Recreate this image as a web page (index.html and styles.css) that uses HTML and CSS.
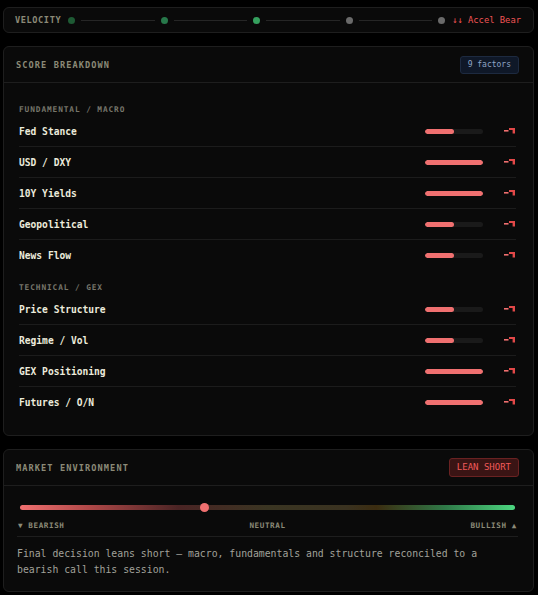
FILE: index.html
```html
<!DOCTYPE html>
<html lang="en">
<head>
    <meta charset="UTF-8">
    <meta name="viewport" content="width=device-width, initial-scale=1.0">
    <title>Bias Dashboard</title>
    <link rel="stylesheet" href="styles.css">
</head>
<body>

<!-- Velocity strip -->
<div class="card velocity">
    <span class="velocity-label">VELOCITY</span>
    <div class="velocity-track">
        <span class="vdot vdot-1"></span><span class="vline"></span>
        <span class="vdot vdot-2"></span><span class="vline"></span>
        <span class="vdot vdot-3"></span><span class="vline"></span>
        <span class="vdot vdot-4"></span><span class="vline"></span>
        <span class="vdot vdot-4"></span>
    </div>
    <span class="velocity-status">&darr;&darr; Accel Bear</span>
</div>

<!-- Score breakdown -->
<div class="card">
    <div class="card-head">
        <span class="card-title">SCORE BREAKDOWN</span>
        <span class="badge badge-blue">9 factors</span>
    </div>
    <div class="card-body score-body">
        <div class="group-label">FUNDAMENTAL / MACRO</div>
        <div class="factor">
            <span class="factor-name">Fed Stance</span>
            <span class="bar"><span class="bar-fill half"></span></span>
            <svg class="tick" width="12" height="6" viewBox="0 0 12 6"><rect x="0" y="2" width="4.5" height="1.6" fill="#f07070"/><path d="M5 0H11V5.5H8.6V2H5Z" fill="#e24848"/></svg>
        </div>
        <div class="factor">
            <span class="factor-name">USD / DXY</span>
            <span class="bar"><span class="bar-fill full"></span></span>
            <svg class="tick" width="12" height="6" viewBox="0 0 12 6"><rect x="0" y="2" width="4.5" height="1.6" fill="#f07070"/><path d="M5 0H11V5.5H8.6V2H5Z" fill="#e24848"/></svg>
        </div>
        <div class="factor">
            <span class="factor-name">10Y Yields</span>
            <span class="bar"><span class="bar-fill full"></span></span>
            <svg class="tick" width="12" height="6" viewBox="0 0 12 6"><rect x="0" y="2" width="4.5" height="1.6" fill="#f07070"/><path d="M5 0H11V5.5H8.6V2H5Z" fill="#e24848"/></svg>
        </div>
        <div class="factor">
            <span class="factor-name">Geopolitical</span>
            <span class="bar"><span class="bar-fill half"></span></span>
            <svg class="tick" width="12" height="6" viewBox="0 0 12 6"><rect x="0" y="2" width="4.5" height="1.6" fill="#f07070"/><path d="M5 0H11V5.5H8.6V2H5Z" fill="#e24848"/></svg>
        </div>
        <div class="factor">
            <span class="factor-name">News Flow</span>
            <span class="bar"><span class="bar-fill half"></span></span>
            <svg class="tick" width="12" height="6" viewBox="0 0 12 6"><rect x="0" y="2" width="4.5" height="1.6" fill="#f07070"/><path d="M5 0H11V5.5H8.6V2H5Z" fill="#e24848"/></svg>
        </div>

        <div class="group-label group-gap">TECHNICAL / GEX</div>
        <div class="factor">
            <span class="factor-name">Price Structure</span>
            <span class="bar"><span class="bar-fill half"></span></span>
            <svg class="tick" width="12" height="6" viewBox="0 0 12 6"><rect x="0" y="2" width="4.5" height="1.6" fill="#f07070"/><path d="M5 0H11V5.5H8.6V2H5Z" fill="#e24848"/></svg>
        </div>
        <div class="factor">
            <span class="factor-name">Regime / Vol</span>
            <span class="bar"><span class="bar-fill half"></span></span>
            <svg class="tick" width="12" height="6" viewBox="0 0 12 6"><rect x="0" y="2" width="4.5" height="1.6" fill="#f07070"/><path d="M5 0H11V5.5H8.6V2H5Z" fill="#e24848"/></svg>
        </div>
        <div class="factor">
            <span class="factor-name">GEX Positioning</span>
            <span class="bar"><span class="bar-fill full"></span></span>
            <svg class="tick" width="12" height="6" viewBox="0 0 12 6"><rect x="0" y="2" width="4.5" height="1.6" fill="#f07070"/><path d="M5 0H11V5.5H8.6V2H5Z" fill="#e24848"/></svg>
        </div>
        <div class="factor">
            <span class="factor-name">Futures / O/N</span>
            <span class="bar"><span class="bar-fill full"></span></span>
            <svg class="tick" width="12" height="6" viewBox="0 0 12 6"><rect x="0" y="2" width="4.5" height="1.6" fill="#f07070"/><path d="M5 0H11V5.5H8.6V2H5Z" fill="#e24848"/></svg>
        </div>
    </div>
</div>

<!-- Market environment -->
<div class="card">
    <div class="card-head">
        <span class="card-title">MARKET ENVIRONMENT</span>
        <span class="badge badge-red">LEAN SHORT</span>
    </div>
    <div class="card-body env-body">
        <div class="gauge">
            <span class="gauge-marker" style="left: 37.2%"></span>
        </div>
        <div class="gauge-labels">
            <span>&#9660; BEARISH</span>
            <span>NEUTRAL</span>
            <span>BULLISH &#9650;</span>
        </div>
        <p class="env-note">Final decision leans short — macro, fundamentals and structure reconciled to a bearish call this session.</p>
    </div>
</div>

</body>
</html>
```

FILE: styles.css
```css
body {
    margin: 0;
    padding: 7px 4px 5px 3px;
    background: #000;
    font-family: "DejaVu Sans Mono", "Liberation Mono", monospace;
    color: #ecebdc;
    display: flex;
    flex-direction: column;
    gap: 13px;
}

/* Cards */
.card {
    background: #0a0a0a;
    border: 1px solid #1e1e1e;
    border-radius: 6px;
}

.card-head {
    display: flex;
    justify-content: space-between;
    align-items: center;
    height: 35px;
    padding: 0 14px 0 12px;
    border-bottom: 1px solid #1e1e1e;
}

.card-title {
    font-size: 8.6px;
    font-weight: bold;
    letter-spacing: 1.1px;
    color: #8c8a78;
}

.badge {
    font-size: 8px;
    border-radius: 3px;
    padding: 0 7px;
    height: 16px;
    line-height: 16px;
}

.badge-blue {
    background: #0f1828;
    border: 1px solid #1d2a40;
    color: #8fa6c6;
}

.badge-red {
    background: #3a1414;
    border: 1px solid #6a2222;
    color: #f25a5a;
    font-size: 9px;
    height: 17px;
    line-height: 17px;
    padding: 0 7px;
}

/* Velocity strip */
.velocity {
    display: flex;
    align-items: center;
    height: 24px;
    padding: 0 12px 0 11px;
}

.velocity-label {
    font-size: 8.6px;
    font-weight: bold;
    letter-spacing: 0.6px;
    color: #8c8a78;
}

.velocity-track {
    flex: 1;
    display: flex;
    align-items: center;
    margin: 0 7px;
}

.vdot {
    width: 7px;
    height: 7px;
    border-radius: 50%;
    flex-shrink: 0;
}

.vdot-1 { background: #1e5a34; }
.vdot-2 { background: #27784a; }
.vdot-3 { background: #35a05e; }
.vdot-4 { background: #6a6a6a; }

.vline {
    flex: 1;
    height: 1px;
    background: #262626;
    margin: 0 6px;
}

.velocity-status {
    font-size: 8.8px;
    color: #f25454;
}

/* Score breakdown */
.score-body {
    padding: 22px 17px 18px 15px;
}

.group-label {
    font-size: 7.8px;
    font-weight: bold;
    letter-spacing: 0.9px;
    color: #77766a;
    height: 10px;
    line-height: 10px;
    margin-bottom: 1px;
}

.group-gap {
    margin-top: 13px;
}

.factor {
    display: flex;
    align-items: center;
    height: 30px;
    border-bottom: 1px solid #1c1c1c;
}

.factor:last-child,
.factor:has(+ .group-label) {
    border-bottom: none;
}

.factor-name {
    flex: 1;
    font-size: 9.6px;
    font-weight: bold;
}

.bar {
    width: 58px;
    height: 5px;
    border-radius: 3px;
    background: #1a1a1a;
    overflow: hidden;
}

.bar-fill {
    display: block;
    height: 100%;
    background: #f07070;
    border-radius: 3px;
}

.bar-fill.half { width: 50%; }
.bar-fill.full { width: 100%; }

.tick {
    margin-left: 21px;
}

/* Market environment */
.env-body {
    padding: 19px 15px 13px 13px;
}

.gauge {
    position: relative;
    height: 5px;
    margin: 0 3px 0 3px;
    border-radius: 3px;
    background: linear-gradient(90deg, #f07070 0%, #b04848 14%, #4a2424 32%, #3a3522 50%, #3a3220 66%, #3b2c10 72%, #2f7a48 86%, #4cd680 100%);
}

.gauge-marker {
    position: absolute;
    top: -2px;
    width: 9px;
    height: 9px;
    margin-left: -4.5px;
    border-radius: 50%;
    background: #f07070;
}

.gauge-labels {
    display: flex;
    justify-content: space-between;
    font-size: 7.6px;
    font-weight: bold;
    letter-spacing: 0.6px;
    color: #8c8a78;
    margin-top: 11px;
    padding: 0 1px 6px 1px;
    border-bottom: 1px solid #1e1e1e;
}

.env-note {
    margin: 9px 0 0;
    font-size: 9.8px;
    line-height: 16px;
    color: #a2a29a;
}
```
